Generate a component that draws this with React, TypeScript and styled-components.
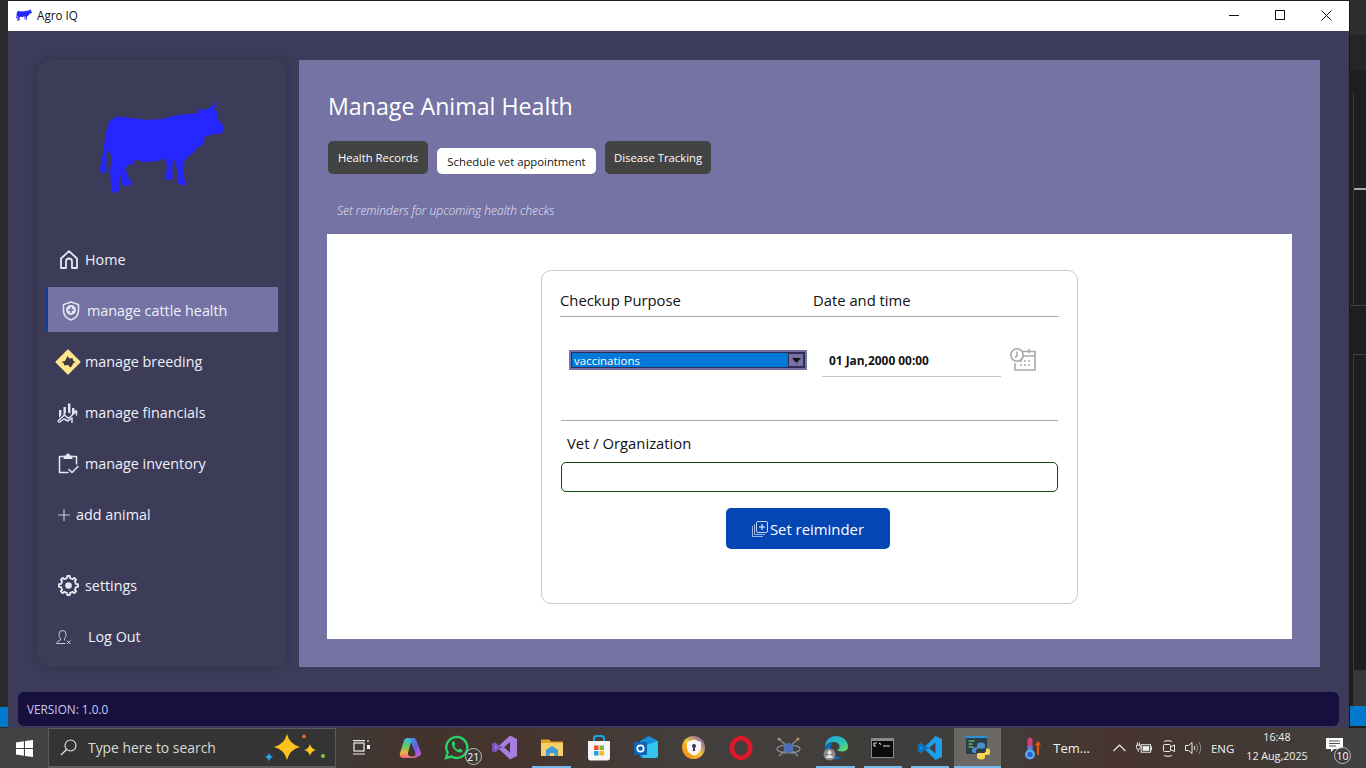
import React from "react";
import styled, { createGlobalStyle } from "styled-components";

const FONT = `"Open Sans", "Noto Sans", sans-serif`;

const Global = createGlobalStyle`
  html, body { margin: 0; padding: 0; width: 1366px; height: 768px; overflow: hidden; background: #1e1e1e; }
  * { box-sizing: border-box; }
  body { font-family: ${FONT}; }
`;

const Screen = styled.div`
  width: 1366px;
  height: 768px;
  display: flex;
  flex-direction: column;
`;
const Desktop = styled.div`
  height: 728px;
  display: flex;
`;
const LeftEdge = styled.div`
  width: 8px;
  display: flex;
  flex-direction: column;
  background: #2b2b2b;
`;
const EdgeFill = styled.div`
  flex: 1;
`;
const EdgeBlue = styled.div`
  height: 20px;
  margin-bottom: 1px;
  background: #007acc;
`;
const RightEdge = styled.div`
  width: 17px;
  display: flex;
  flex-direction: column;
  background: #1e1e1e;
  border-left: 1px solid #161616;
`;
const EdgeBand = styled.div<{ $h: number; $bg: string; $box?: boolean; $top?: boolean }>`
  height: ${(p) => p.$h}px;
  flex: none;
  background: ${(p) => p.$bg};
  border-left: ${(p) => (p.$box ? "1px solid #3a3a3a" : "none")};
  margin-left: ${(p) => (p.$box ? "3px" : "0")};
  border-top: ${(p) => (p.$top ? "1px solid #444" : "none")};
`;
const EdgeTick = styled.div`
  height: 2px;
  margin-left: 4px;
  background: #a8a8a8;
`;

const Window = styled.div`
  width: 1341px;
  height: 727px;
  margin-top: 1px;
  background: #3c3c5a;
  display: flex;
  flex-direction: column;
`;
const TitleBar = styled.div`
  height: 30px;
  background: #fff;
  display: flex;
  align-items: center;
  padding: 0 0 2px 8px;
`;
const TitleText = styled.span`
  margin-left: 5px;
  font-size: 11.7px;
  color: #111;
`;
const WinButtons = styled.div`
  margin-left: auto;
  display: flex;
  height: 100%;
`;
const WinButton = styled.div`
  width: 46px;
  display: flex;
  align-items: center;
  justify-content: center;
`;
const Body = styled.div`
  height: 607px;
  margin: 29px 29px 0 29px;
  display: flex;
  gap: 12px;
`;
const Sidebar = styled.aside`
  width: 250px;
  border-radius: 14px;
  background: #3c3b58;
  box-shadow: 0 0 9px rgba(20, 20, 40, 0.28);
  padding: 41px 0 0 9px;
  display: flex;
  flex-direction: column;
`;
const Logo = styled.div`
  height: 135px;
  padding-left: 54px;
`;
const Nav = styled.nav`
  display: flex;
  flex-direction: column;
  gap: 6px;
`;
const NavItem = styled.div<{ $active?: boolean; $pad: number; $gap: number; $mt?: number }>`
  width: 232px;
  height: 45px;
  flex: none;
  display: flex;
  align-items: center;
  gap: ${(p) => p.$gap}px;
  padding: 2px 0 0 ${(p) => p.$pad}px;
  margin-top: ${(p) => p.$mt ?? 0}px;
  font-size: 14.35px;
  color: #eef0fa;
  background: ${(p) => (p.$active ? "#7473a3" : "transparent")};
  border-left: ${(p) => (p.$active ? "2px solid #0f3f9e" : "none")};
`;
const Main = styled.main`
  width: 1021px;
  background: #7473a3;
  padding: 29px 28px 28px 28px;
  display: flex;
  flex-direction: column;
`;
const Heading = styled.h1`
  margin: 0;
  padding-left: 1px;
  height: 36px;
  line-height: 35px;
  font-size: 23.2px;
  font-weight: 400;
  color: #fff;
`;
const Tabs = styled.div`
  margin-top: 16px;
  padding-left: 1px;
  display: flex;
  align-items: flex-end;
  gap: 9px;
`;
const Tab = styled.div<{ $active?: boolean; $w: number }>`
  width: ${(p) => p.$w}px;
  height: ${(p) => (p.$active ? 26 : 33)}px;
  border-radius: 5px;
  background: ${(p) => (p.$active ? "#fff" : "#434343")};
  color: ${(p) => (p.$active ? "#111" : "#fff")};
  font-size: 11.3px;
  display: flex;
  align-items: center;
  justify-content: center;
  white-space: nowrap;
`;
const Hint = styled.div`
  margin-top: 29px;
  padding-left: 10px;
  height: 16px;
  line-height: 16px;
  font-size: 12px;
  font-style: italic;
  font-weight: 300;
  color: #e6e6fb;
`;
const Sheet = styled.section`
  margin-top: 15px;
  height: 405px;
  background: #fff;
  padding: 36px 0 0 214px;
`;
const Card = styled.div`
  width: 537px;
  height: 334px;
  border: 1px solid #c9c9c9;
  border-radius: 10px;
  padding: 0 18px;
  display: flex;
  flex-direction: column;
`;
const Header = styled.div`
  height: 46px;
  border-bottom: 1px solid #a9a9a9;
  display: flex;
  align-items: flex-end;
  padding-bottom: 6px;
  font-size: 14.8px;
  color: #111;
`;
const HeadCell = styled.div<{ $w: number }>`
  width: ${(p) => p.$w}px;
`;
const PickRow = styled.div`
  height: 104px;
  margin: 0 1px;
  border-bottom: 1px solid #a9a9a9;
  padding: 33px 0 0 8px;
  display: flex;
  align-items: flex-start;
`;
const Select = styled.div`
  width: 238px;
  height: 20px;
  border: 2px solid #7473a3;
  outline: 1px solid #2e2d55;
  outline-offset: -3px;
  background: #0078d7;
  color: #fff;
  font-size: 11.5px;
  display: flex;
  align-items: center;
  padding-left: 3px;
  justify-content: space-between;
`;
const SelectArrow = styled.div`
  width: 16px;
  height: 14px;
  margin-right: 1px;
  background: #7473a3;
  border: 1px solid #2e2d55;
  display: flex;
  align-items: center;
  justify-content: center;
`;
const DateField = styled.div`
  width: 179px;
  height: 28px;
  margin-left: 15px;
  margin-top: -1px;
  padding: 0 0 5px 7px;
  border-bottom: 1px solid #c6c6c6;
  font-size: 11.9px;
  font-weight: 700;
  color: #111;
  display: flex;
  align-items: center;
`;
const CalButton = styled.div`
  margin-left: 9px;
  margin-top: -3px;
`;
const VetLabel = styled.div`
  margin-top: 11px;
  padding-left: 7px;
  height: 22px;
  line-height: 22px;
  font-size: 14.8px;
  color: #111;
`;
const TextInput = styled.div`
  margin: 8px 1px 0 1px;
  height: 30px;
  border: 1px solid #0a4d0a;
  border-radius: 5px;
`;
const SubmitRow = styled.div`
  margin-top: 16px;
  padding-left: 166px;
`;
const Submit = styled.div`
  width: 164px;
  height: 41px;
  background: #0546b5;
  border-radius: 5px;
  display: flex;
  align-items: center;
  justify-content: center;
  gap: 2px;
  color: #fff;
  font-size: 14.9px;
`;
const VersionBar = styled.footer`
  margin: 25px 10px 0 10px;
  height: 34px;
  background: #17103f;
  border-radius: 6px;
  color: #c9c9ef;
  font-size: 11.8px;
  display: flex;
  align-items: center;
  padding-left: 9px;
`;

const Taskbar = styled.div`
  height: 40px;
  display: flex;
  align-items: stretch;
  color: #f0f0f0;
  background: linear-gradient(90deg, #424242 0%, #3d3d3d 22%, #43332d 30%, #46352e 38%, #433f3c 50%, #3f3e3c 70%, #47352e 82%, #423934 92%, #414141 100%);
  & > * {
    flex: none;
  }
`;
const StartCell = styled.div`
  width: 48px;
  display: flex;
  align-items: center;
  justify-content: center;
`;
const SearchBox = styled.div`
  width: 288px;
  background: #343434;
  border: 1px solid #5c5c5c;
  border-bottom-width: 2px;
  display: flex;
  align-items: center;
  padding-left: 11px;
`;
const SearchText = styled.span`
  margin-left: 11px;
  width: 175px;
  font-size: 13.9px;
  color: #d9d9d9;
`;
const AppCell = styled.div<{ $open?: boolean; $current?: boolean; $w?: number }>`
  width: ${(p) => p.$w ?? 47.33}px;
  position: relative;
  display: flex;
  align-items: center;
  justify-content: center;
  padding-bottom: 1px;
  background: ${(p) => (p.$current ? "#6a6865" : "transparent")};
  &::after {
    content: "";
    display: ${(p) => (p.$open ? "block" : "none")};
    position: absolute;
    bottom: 0;
    left: ${(p) => (p.$current ? 0 : 4.5)}px;
    right: ${(p) => (p.$current ? 0 : 4.5)}px;
    height: 2px;
    background: #76b9ed;
  }
`;
const Badge = styled.span<{ $big?: boolean }>`
  position: absolute;
  right: ${(p) => (p.$big ? "1px" : "-1px")};
  bottom: ${(p) => (p.$big ? "4px" : "3px")};
  width: 17px;
  height: 17px;
  border-radius: 50%;
  border: 1px solid #bdbdbd;
  background: rgba(60, 60, 60, 0.85);
  color: #fff;
  font-size: 10.5px;
  display: flex;
  align-items: center;
  justify-content: center;
`;
const Weather = styled.div`
  width: 111.7px;
  padding-left: 23px;
  display: flex;
  align-items: center;
  gap: 11px;
  font-size: 13px;
`;
const Tray = styled.div`
  display: flex;
  align-items: center;
  gap: 10px;
`;
const TrayText = styled.span`
  font-size: 11.5px;
  width: 24px;
`;
const Clock = styled.div`
  width: 66px;
  margin-left: 9px;
  display: flex;
  flex-direction: column;
  align-items: center;
  font-size: 10.7px;
  line-height: 19px;
  white-space: nowrap;
`;
const NoteCell = styled.div`
  position: relative;
  margin-left: 16px;
  width: 26px;
  display: flex;
  align-items: center;
  padding-bottom: 6px;
`;

const COW =
  "M320 395L330 365L350 352L380 355L440 362L490 358L530 348L585 342L600 340L592 326L608 334L625 328L638 320L645 306L646 322L636 332L650 335L653 360L668 378L670 392L660 400L635 402L612 410L610 432L600 437L590 445L572 462L553 478L548 500L552 540L558 550L550 555L535 548L532 510L528 478L520 480L515 505L517 535L500 537L495 528L503 505L498 472L470 482L430 485L405 475L395 495L385 490L380 500L375 497L378 520L393 548L385 556L370 556L360 520L355 515L358 570L345 577L335 572L332 510L338 470L325 450L320 420L318 470L318 515L305 520L302 505L310 460L318 410Z";

const Cow = ({ w, h }: { w: number; h: number }) => (
  <svg width={w} height={h} viewBox="300 304 372 274" preserveAspectRatio="none">
    <path d={COW} fill="#2626ff" stroke="#2626ff" strokeWidth="3" strokeLinejoin="round" />
  </svg>
);

const Ico = styled.svg`
  display: block;
  flex: none;
`;
const S = { fill: "none", stroke: "#e4e6f2", strokeLinecap: "round", strokeLinejoin: "round" } as const;

const gearPath = (() => {
  const pts: string[] = [];
  const teeth = 8;
  for (let i = 0; i < teeth; i++) {
    const a = (i / teeth) * Math.PI * 2;
    const step = (Math.PI * 2) / teeth;
    const rows: [number, number][] = [
      [8.6, -0.5 * step],
      [8.6, -0.27 * step],
      [11, -0.17 * step],
      [11, 0.17 * step],
      [8.6, 0.27 * step],
    ];
    rows.forEach(([r, d]) => {
      const x = 12 + r * Math.cos(a + d);
      const y = 12 + r * Math.sin(a + d);
      pts.push(`${x.toFixed(2)} ${y.toFixed(2)}`);
    });
  }
  return `M${pts.join("L")}Z`;
})();

const HomeIcon = () => (
  <Ico width="18" height="19" viewBox="0 0 18 19">
    <path {...S} strokeWidth="1.8" d="M1 8.500L9 1.200l8 7.300V18h-5v-6.500a3 3 0 0 0-6 0V18H1z" />
  </Ico>
);
const ShieldIcon = () => (
  <Ico width="18" height="20" viewBox="0 0 18 20">
    <path {...S} strokeWidth="1.500" d="M9 1l7.500 2.600v6.200c0 4.400-3.200 7.600-7.500 9.200-4.300-1.600-7.500-4.800-7.500-9.200V3.600z" />
    <circle cx="9" cy="9" r="5" fill="#e4e6f2" />
    <path d="M9 6v6M6 9h6" stroke="#7473a3" strokeWidth="1.600" />
  </Ico>
);
const BreedIcon = () => (
  <Ico width="26" height="26" viewBox="0 0 26 26">
    <path d="M13 1.500L24.500 13 13 24.500 1.500 13z" fill="#ffe58c" stroke="#ffe58c" strokeWidth="2" strokeLinejoin="round" />
    <path d="M6.500 13l3.500-1 2.500-5 2 2.500 3-.5.5 2.500 2.500 1.500-2.500 1.500-1 2.500-1.500 1.500-2.500-2.500-3.500.5-1-2.500z" fill="#3f3c48" />
  </Ico>
);
const FinanceIcon = () => (
  <Ico width="21" height="20" viewBox="0 0 21 20">
    <path d="M2 7h2.400v5L2 15zM6.500 4h2.400v6L6.500 13zM11 0.500h2.400V11L11 9zM15 5h2.400v5L15 12z" fill="#e4e6f2" />
    <path {...S} strokeWidth="1.500" d="M1 18l6.500-6 4 3.500L19 8.500M15.500 8H19.500V12" />
    <path {...S} strokeWidth="1.400" d="M2 19.500l5-3.500 4 2 4-3v4.500" />
  </Ico>
);
const ClipIcon = () => (
  <Ico width="21" height="21" viewBox="0 0 21 21">
    <path {...S} strokeWidth="1.500" d="M5 3.500H1.500v16H10M15 3.500h3.500V11" />
    <path d="M5.500 2.500h2.500a2 2 0 0 1 4 0h2.500V6h-9z" fill="#e4e6f2" />
    <path {...S} strokeWidth="1.600" d="M11 16.500l3 3 6-6" />
  </Ico>
);
const PlusIcon = () => (
  <Ico width="12" height="12" viewBox="0 0 12 12">
    <path d="M6 0v12M0 6h12" stroke="#c9cad8" strokeWidth="1.100" />
  </Ico>
);
const GearIcon = () => (
  <Ico width="21" height="21" viewBox="0 0 24 24">
    <path d={gearPath} fill="none" stroke="#e4e6f2" strokeWidth="2.100" strokeLinejoin="round" />
    <circle cx="12" cy="12" r="3.800" fill="#e4e6f2" />
  </Ico>
);
const LogoutIcon = () => (
  <Ico width="16" height="16" viewBox="0 0 16 16">
    <path {...S} stroke="#c9cad8" strokeWidth="1" d="M1 14.500h8M1 14.500c0-2 1.500-2.800 3.500-3.500V9.500C3.500 8.500 3 7 3 5a3.500 3.500 0 0 1 7 0c0 2-.5 3.500-1.500 4.500V11" />
    <path d="M11 11.500l3.500 3.500M14.500 11.500L11 15" stroke="#c9cad8" strokeWidth="1" />
  </Ico>
);
const CalIcon = () => (
  <Ico width="26" height="24" viewBox="0 0 26 24">
    <g fill="none" stroke="#a9a9a9" strokeWidth="1.600">
      <path d="M12 4.500h13V23H5v-7" />
      <path d="M19 2v4M12 9h13" />
      <circle cx="7" cy="8" r="6.200" />
      <path d="M7 4.500V9L5 10.500" />
    </g>
    <path d="M10 14h2M14 14h2M18 14h2M10 18h2M14 18h2M18 18h2" stroke="#a9a9a9" strokeWidth="1.600" />
  </Ico>
);
const StackIcon = () => (
  <Ico width="16" height="16" viewBox="0 0 16 16">
    <rect x="4.500" y="0.500" width="11" height="11" rx="1.500" fill="none" stroke="#c9d6f2" />
    <path d="M10 3v6M7 6h6" stroke="#fff" strokeWidth="1" />
    <path d="M2.500 3v10.500h10.500M0.500 5v10.500h10.500" fill="none" stroke="#9db4e6" strokeWidth="1" />
  </Ico>
);

const WinLogo = () => (
  <Ico width="17" height="17" viewBox="0 0 17 17">
    <path d="M0 2.400L7.900 1.200V8H0zM9 1L17 0V8H9zM0 9H7.900V15.800L0 14.600zM9 9H17V17L9 15.900z" fill="#fff" />
  </Ico>
);
const SearchGlass = () => (
  <Ico width="17" height="17" viewBox="0 0 17 17">
    <circle cx="10.500" cy="6.500" r="5.500" fill="none" stroke="#e5e5e5" strokeWidth="1.100" />
    <path d="M6.500 10.500L1 16" stroke="#e5e5e5" strokeWidth="1.300" />
  </Ico>
);
const star = (x: number, y: number, r: number) =>
  `M${x} ${y - r}Q${x + r * 0.2} ${y - r * 0.2} ${x + r} ${y}Q${x + r * 0.2} ${y + r * 0.2} ${x} ${y + r}Q${x - r * 0.2} ${y + r * 0.2} ${x - r} ${y}Q${x - r * 0.2} ${y - r * 0.2} ${x} ${y - r}Z`;
const Sparkles = () => (
  <Ico width="62" height="30" viewBox="0 0 62 30">
    <path d={star(24, 14, 13)} fill="#fcc21b" />
    <path d={star(47, 17, 6)} fill="#fbc52a" />
    <path d={star(6, 24, 4.500)} fill="#29a3ea" />
    <circle cx="41" cy="3.500" r="2" fill="#e2652c" />
    <circle cx="60" cy="23" r="2" fill="#8cc63f" />
  </Ico>
);
const TaskView = () => (
  <Ico width="17" height="15" viewBox="0 0 17 15">
    <g stroke="#eee" fill="none" strokeWidth="1.200">
      <rect x="1" y="3" width="10" height="8" />
      <path d="M0 0.700h12M0 14h12M15 0v2" />
    </g>
    <rect x="14" y="5" width="3" height="4" fill="#eee" />
  </Ico>
);
const Copilot = () => (
  <Ico width="24" height="24" viewBox="0 0 24 24">
    <defs>
      <linearGradient id="cp1" x1="0" y1="0" x2="1" y2="1">
        <stop offset="0" stopColor="#2fb0f0" /><stop offset=".55" stopColor="#6a58e8" /><stop offset="1" stopColor="#e25fd0" />
      </linearGradient>
      <linearGradient id="cp2" x1="0.500" y1="0" x2="0.500" y2="1">
        <stop offset="0" stopColor="#3db4f2" /><stop offset=".4" stopColor="#5ec86a" /><stop offset=".75" stopColor="#f2b03a" /><stop offset="1" stopColor="#ef5f8f" />
      </linearGradient>
    </defs>
    <path d="M10 2h5c2 0 3 1 3.700 3l4 11c.8 2.500-1 4.500-3 4.500h-4c1.500-1 2-2.500 1.500-4L13 6c-.5-2-1.500-4-3-4z" fill="url(#cp1)" />
    <path d="M10 2C7 2 6 4 5.500 6L2 17c-1 3 1 5 3 5h11c2 0 3.500-1 4-1.500h-7c-2 0-3.500-2-3-4L13 6c.5-2-.5-4-3-4z" fill="url(#cp2)" />
  </Ico>
);
const WhatsApp = () => (
  <Ico width="25" height="25" viewBox="0 0 25 25">
    <path d="M2 23l1.600-5.500A10.500 10.500 0 1 1 7.500 21.500z" fill="none" stroke="#25d366" strokeWidth="2.400" />
    <path d="M8 7c1-1 2-1 2.500 0l.8 2c.2.500-1 1.500-1 2 .5 1.500 2.200 3 3.700 3.700.5 0 1.500-1.200 2-1l2 1c.8.500.5 1.800-.5 2.500-3 1.500-10.500-4-9.500-8.500z" fill="#25d366" />
  </Ico>
);
const VsPurple = () => (
  <Ico width="25" height="25" viewBox="0 0 25 25">
    <path d="M18 0.500L25 4v17l-7 3.500L7 14l-4 3.200-3-1.500V9l3-1.500L7 10.800zM18 7l-6 5.300 6 5.200z" fill="#a77de0" />
    <path d="M0 9l3-1.500L7 10.800 12 12.300 7 14l-4 3.200-3-1.500zM3 10v4.500l2.500-2.200z" fill="#7a52b8" />
  </Ico>
);
const Folder = () => (
  <Ico width="22" height="20" viewBox="0 0 22 20">
    <path d="M0 1.500h8l2 2h12V18H0z" fill="#e3a520" />
    <path d="M0 5h22v13H0z" fill="#f7d06a" />
    <path d="M5 12l6-4 6 4v6h-3.500v-3h-5v3H5z" fill="#3d9be0" />
  </Ico>
);
const Store = () => (
  <Ico width="24" height="26" viewBox="0 0 24 26">
    <path d="M7 8V3.500C7 2 8 1 9.500 1h5C16 1 17 2 17 3.500V8" fill="none" stroke="#1ba5e0" strokeWidth="2" />
    <path d="M1 6h22v17c0 1.500-1 2.500-2.500 2.500h-17C2 25.500 1 24.500 1 23z" fill="#f5f5f5" />
    <rect x="7" y="10.500" width="4.500" height="4.500" fill="#e9532d" />
    <rect x="12.500" y="10.500" width="4.500" height="4.500" fill="#7eb92e" />
    <rect x="7" y="16" width="4.500" height="4.500" fill="#1fa4e8" />
    <rect x="12.500" y="16" width="4.500" height="4.500" fill="#fab818" />
  </Ico>
);
const Outlook = () => (
  <Ico width="25" height="23" viewBox="0 0 25 23">
    <path d="M6 5l9-5 9 5v14a3 3 0 0 1-3 3H9a3 3 0 0 1-3-3z" fill="#1590d8" />
    <path d="M6 11l18-6v14a3 3 0 0 1-3 3H9z" fill="#34c5ee" />
    <rect x="0" y="6" width="13" height="13" rx="1" fill="#0f62b8" />
    <circle cx="6.500" cy="12.500" r="3.200" fill="none" stroke="#fff" strokeWidth="1.700" />
  </Ico>
);
const SecureBrowser = () => (
  <Ico width="23" height="23" viewBox="0 0 23 23">
    <defs>
      <linearGradient id="av" x1="0" y1="1" x2="1" y2="0">
        <stop offset="0" stopColor="#f0761a" /><stop offset=".5" stopColor="#f4c52e" /><stop offset="1" stopColor="#6d4ad8" />
      </linearGradient>
    </defs>
    <circle cx="11.500" cy="11.500" r="11.500" fill="url(#av)" />
    <path d="M12 3.500l7 2.500v5c0 4.500-3 7-7 8.500-4-1.500-7-4-7-8.500V6z" fill="#f7f7fb" />
    <circle cx="12" cy="10" r="2" fill="#3c3c5a" />
    <path d="M11.200 11h1.600l.4 4h-2.400z" fill="#3c3c5a" />
  </Ico>
);
const Opera = () => (
  <Ico width="24" height="24" viewBox="0 0 24 24">
    <ellipse cx="12" cy="12" rx="9.200" ry="9.800" fill="none" stroke="#d81a2a" strokeWidth="4.800" />
  </Ico>
);
const Atom = () => (
  <Ico width="25" height="22" viewBox="0 0 25 22">
    <g fill="none" stroke="#8a8f99" strokeWidth="1.200">
      <ellipse cx="12.500" cy="12" rx="11.500" ry="4" />
      <path d="M3 2l19 17M22 2L3 19" />
    </g>
    <circle cx="12.500" cy="11" r="5" fill="#4a6fb5" />
    <circle cx="3" cy="2" r="1.500" fill="#b9975f" />
    <circle cx="22" cy="2" r="1.500" fill="#b9975f" />
  </Ico>
);
const Edge = () => (
  <Ico width="26" height="26" viewBox="0 0 26 26">
    <defs>
      <linearGradient id="ed" x1="0" y1="0" x2="1" y2="1">
        <stop offset="0" stopColor="#1b9de2" /><stop offset=".6" stopColor="#2fc7b0" /><stop offset="1" stopColor="#7ed957" />
      </linearGradient>
    </defs>
    <path d="M2 12C2 5 7 1 13 1c7 0 12 5 12 11 0 3-3 4.500-6 4.500-3 0-5-1-5-1.500 2-.5 3-2 2.500-4C16 8 13.500 7 11 7 6 7 3.500 9.500 2 12z" fill="url(#ed)" />
    <path d="M2 12c2-3 5-4 8-4-3 3-4 8 0 12 3 2.500 7 2.500 10 1-3 3-6 4-9 3.500C5 23.500 1 18 2 12z" fill="#0d6cb8" />
    <circle cx="6.500" cy="19.500" r="6" fill="#8a8a8a" />
    <circle cx="6.500" cy="17.500" r="2" fill="#e6e6e6" />
    <path d="M2.800 23c.5-2 2-3 3.700-3s3.200 1 3.700 3z" fill="#e6e6e6" />
  </Ico>
);
const Terminal = () => (
  <Ico width="23" height="20" viewBox="0 0 23 20">
    <rect x="0.500" y="0.500" width="22" height="19" fill="#0c0c0c" stroke="#8a8a8a" />
    <rect x="1" y="1" width="21" height="2" fill="#8a8a8a" />
    <path d="M3 5h3M3 8h2M3 5v3M8 5l2 1.500M12 8h7" stroke="#ddd" strokeWidth="1.100" fill="none" />
  </Ico>
);
const VsCode = () => (
  <Ico width="24" height="24" viewBox="0 0 24 24">
    <path d="M17.500 0L24 3v18l-6.500 3L7 13.500 2.500 17 0 15.500v-7L2.500 7 7 10.500zM17.500 6.500L11 12l6.500 5.500z" fill="#1e9fe8" />
    <path d="M0 8.500L2.500 7 11 12 2.500 17 0 15.500zM2.500 10v4l2.200-2z" fill="#0d6fb8" />
  </Ico>
);
const PyWindow = () => (
  <Ico width="24" height="24" viewBox="0 0 24 24">
    <rect x="0" y="0" width="21" height="18" fill="#2c3e46" />
    <rect x="0" y="0" width="21" height="2" fill="#2f8fd0" />
    <path d="M2.500 5h6M2.500 8h4M2.500 11h5" stroke="#62b16e" strokeWidth="1.300" />
    <path d="M14.500 6.500c-2.500 0-3.500 1-3.500 2.500v2.500H8C6.500 11.500 6 13 6 14.500S6.500 17 8 17h2v-2c0-1.500 1-2.500 2.500-2.500h5c1 0 1.500-.5 1.500-1.500V9c0-1.500-1.500-2.500-4.500-2.500z" fill="#4a8fc9" />
    <path d="M15.500 23.500c2.500 0 3.500-1 3.500-2.500v-2h3.500c1 0 1.500-1.500 1.500-3.500s-.5-3-1.500-3H20v2c0 1.500-1 2.500-2.500 2.500h-5c-1 0-1.500.5-1.500 1.500V21c0 1.500 1.500 2.500 4.500 2.500z" fill="#f7d354" />
  </Ico>
);
const Thermo = () => (
  <Ico width="18" height="23" viewBox="0 0 18 23">
    <rect x="3.500" y="0.500" width="5" height="16" rx="2.500" fill="#d0417c" />
    <rect x="3.500" y="9" width="5" height="8" fill="#4f7de0" />
    <circle cx="6" cy="17.500" r="5" fill="#5aa8ee" />
    <circle cx="6" cy="17.500" r="2.600" fill="#2a62c8" />
    <path d="M14 6v12" stroke="#e2570f" strokeWidth="2.200" />
    <path d="M11 8.500L14 4l3 4.500z" fill="#e2570f" />
  </Ico>
);
const Chevron = () => (
  <Ico width="13" height="8" viewBox="0 0 13 8">
    <path d="M0.500 7L6.500 1l6 6" fill="none" stroke="#eee" strokeWidth="1.100" />
  </Ico>
);
const Power = () => (
  <Ico width="16" height="12" viewBox="0 0 17 12">
    <g fill="none" stroke="#eee" strokeWidth="1">
      <rect x="5.500" y="2.500" width="10" height="8" />
      <path d="M0.500 3h4v2.500a2 2 0 0 1-4 0zM1.500 0v3M3.500 0v3M2.500 7.500V10" />
    </g>
    <rect x="7" y="4" width="7" height="5" fill="#eee" />
    <rect x="16" y="4.500" width="1" height="4" fill="#eee" />
  </Ico>
);
const Camera = () => (
  <Ico width="13" height="17" viewBox="0 0 13 17">
    <g fill="none" stroke="#eee" strokeWidth="1">
      <rect x="1.500" y="4.500" width="7" height="7" rx="1" />
      <path d="M8.500 7l4-2v6.500l-4-2M2 1.500C4 .5 8 .5 10 1.500M2 15.500c2 1 6 1 8 0" />
    </g>
  </Ico>
);
const Volume = () => (
  <Ico width="16" height="14" viewBox="0 0 16 14">
    <g fill="none" stroke="#eee" strokeWidth="1">
      <path d="M0.500 4.500h3L7 1.500v11l-3.500-3h-3z" />
      <path d="M9 5a3 3 0 0 1 0 4" />
      <path d="M11 3a6 6 0 0 1 0 8M13.500 1a9 9 0 0 1 0 12" stroke="#8d8d8d" />
    </g>
  </Ico>
);
const NoteBubble = () => (
  <Ico width="17" height="15" viewBox="0 0 17 15">
    <path d="M0 0h17v11H8l-3 3v-3H0z" fill="#fff" />
    <path d="M3 3h11M3 5.500h11M3 8h7" stroke="#55504c" strokeWidth="1" />
  </Ico>
);

const apps: { el: React.ReactNode; open?: boolean; current?: boolean; badge?: string; w?: number }[] = [
  { el: <TaskView />, w: 50 },
  { el: <Copilot /> },
  { el: <WhatsApp />, badge: "21" },
  { el: <VsPurple /> },
  { el: <Folder />, open: true },
  { el: <Store /> },
  { el: <Outlook /> },
  { el: <SecureBrowser /> },
  { el: <Opera /> },
  { el: <Atom /> },
  { el: <Edge />, open: true },
  { el: <Terminal />, open: true },
  { el: <VsCode />, open: true },
  { el: <PyWindow />, open: true, current: true },
];

export default function App() {
  return (
    <Screen>
      <Global />
      <Desktop>
        <LeftEdge>
          <EdgeFill />
          <EdgeBlue />
        </LeftEdge>
        <Window>
          <TitleBar>
            <Cow w={16} h={12} />
            <TitleText>Agro IQ</TitleText>
            <WinButtons>
              <WinButton>
                <svg width="10" height="10" viewBox="0 0 10 10"><path d="M0 5.500h10" stroke="#111" /></svg>
              </WinButton>
              <WinButton>
                <svg width="10" height="10" viewBox="0 0 10 10"><rect x=".5" y=".5" width="9" height="9" fill="none" stroke="#111" /></svg>
              </WinButton>
              <WinButton>
                <svg width="11" height="11" viewBox="0 0 11 11"><path d="M.5.500l10 10M10.500.500l-10 10" stroke="#111" /></svg>
              </WinButton>
            </WinButtons>
          </TitleBar>
          <Body>
            <Sidebar>
              <Logo>
                <Cow w={124} h={92} />
              </Logo>
              <Nav>
                <NavItem $pad={14} $gap={7}><HomeIcon />Home</NavItem>
                <NavItem $active $pad={14} $gap={7}><ShieldIcon />manage cattle health</NavItem>
                <NavItem $pad={9} $gap={4}><BreedIcon />manage breeding</NavItem>
                <NavItem $pad={11} $gap={7}><FinanceIcon />manage financials</NavItem>
                <NavItem $pad={12} $gap={6}><ClipIcon />manage inventory</NavItem>
                <NavItem $pad={12} $gap={6}><PlusIcon />add animal</NavItem>
                <NavItem $pad={12} $gap={6} $mt={20}><GearIcon />settings</NavItem>
                <NavItem $pad={10} $gap={16}><LogoutIcon />Log Out</NavItem>
              </Nav>
            </Sidebar>
            <Main>
              <Heading>Manage Animal Health</Heading>
              <Tabs>
                <Tab $w={100}>Health Records</Tab>
                <Tab $active $w={159}>Schedule vet appointment</Tab>
                <Tab $w={106}>Disease Tracking</Tab>
              </Tabs>
              <Hint>Set reminders for upcoming health checks</Hint>
              <Sheet>
                <Card>
                  <Header>
                    <HeadCell $w={253}>Checkup Purpose</HeadCell>
                    <HeadCell $w={200}>Date and time</HeadCell>
                  </Header>
                  <PickRow>
                    <Select>
                      vaccinations
                      <SelectArrow>
                        <svg width="9" height="5" viewBox="0 0 9 5"><path d="M0 0h9L4.500 5z" fill="#111" /></svg>
                      </SelectArrow>
                    </Select>
                    <DateField>01 Jan,2000 00:00</DateField>
                    <CalButton><CalIcon /></CalButton>
                  </PickRow>
                  <VetLabel>Vet / Organization</VetLabel>
                  <TextInput />
                  <SubmitRow>
                    <Submit><StackIcon />Set reiminder</Submit>
                  </SubmitRow>
                </Card>
              </Sheet>
            </Main>
          </Body>
          <VersionBar>VERSION: 1.0.0</VersionBar>
        </Window>
        <RightEdge>
          <EdgeBand $h={35} $bg="#2e2e2e" />
          <EdgeBand $h={35} $bg="#252525" />
          <EdgeBand $h={22} $bg="#1e1e1e" />
          <EdgeBand $h={96} $bg="#1e1e1e" $box />
          <EdgeTick />
          <EdgeBand $h={115} $bg="#1e1e1e" $box />
          <EdgeBand $h={49} $bg="#1e1e1e" $top />
          <EdgeBand $h={316} $bg="#1e1e1e" $box $top />
          <EdgeBand $h={36} $bg="#383838" $box />
          <EdgeBand $h={20} $bg="#007acc" />
        </RightEdge>
      </Desktop>
      <Taskbar>
        <StartCell><WinLogo /></StartCell>
        <SearchBox>
          <SearchGlass />
          <SearchText>Type here to search</SearchText>
          <Sparkles />
        </SearchBox>
        {apps.map((a, i) => (
          <AppCell key={i} $open={a.open} $current={a.current} $w={a.w}>
            {a.el}
            {a.badge && <Badge>{a.badge}</Badge>}
          </AppCell>
        ))}
        <Weather>
          <Thermo />
          Tem...
        </Weather>
        <Tray>
          <Chevron />
          <Power />
          <Camera />
          <Volume />
          <TrayText>ENG</TrayText>
        </Tray>
        <Clock>
          <span>16:48</span>
          <span>12 Aug,2025</span>
        </Clock>
        <NoteCell>
          <NoteBubble />
          <Badge $big>10</Badge>
        </NoteCell>
      </Taskbar>
    </Screen>
  );
}
